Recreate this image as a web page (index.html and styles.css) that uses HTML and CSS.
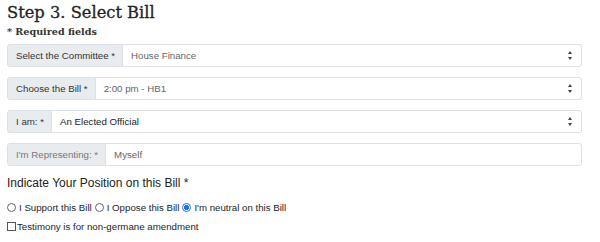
FILE: index.html
```html
<!DOCTYPE html>
<html lang="en">
<head>
<meta charset="UTF-8">
<title>Step 3. Select Bill</title>
<link rel="stylesheet" href="styles.css">
</head>
<body>

<div class="container">
    <h2>Step 3. Select Bill</h2>
    <p class="required">* Required fields</p>

    <div class="input-group">
        <span class="addon">Select the Committee *</span>
        <div class="control select">House Finance<span class="caret"></span></div>
    </div>
    <div class="input-group">
        <span class="addon">Choose the Bill *</span>
        <div class="control select">2:00 pm - HB1<span class="caret"></span></div>
    </div>
    <div class="input-group">
        <span class="addon">I am: *</span>
        <div class="control select dark">An Elected Official<span class="caret"></span></div>
    </div>
    <div class="input-group">
        <span class="addon muted">I'm Representing: *</span>
        <div class="control">Myself</div>
    </div>

    <h4>Indicate Your Position on this Bill *</h4>
    <div class="radios">
        <label><span class="radio"></span>I Support this Bill</label>
        <label><span class="radio"></span>I Oppose this Bill</label>
        <label><span class="radio checked"></span>I'm neutral on this Bill</label>
    </div>
    <label class="check"><span class="box"></span>Testimony is for non-germane amendment</label>
</div>

</body>
</html>
```

FILE: styles.css
```css
body {
    margin: 0;
    padding: 0;
    background-color: #fff;
    color: #212529;
    font-family: "Liberation Sans", Arial, sans-serif;
}
.container {
    padding: 0 18px 0 7px;
}
h2 {
    margin: 0;
    padding-top: 3px;
    height: 23px;
    font-family: "DejaVu Serif", serif;
    font-weight: normal;
    font-size: 16.3px;
    color: #222;
    -webkit-text-stroke: 0.3px #222;
}
.required {
    margin: 0 0 7px;
    height: 11px;
    line-height: 11px;
    font-family: "DejaVu Serif", serif;
    font-weight: bold;
    font-size: 9.6px;
    color: #333;
}
.input-group {
    display: flex;
    height: 23px;
    margin-bottom: 10px;
    font-size: 9.7px;
}
.addon {
    display: flex;
    align-items: center;
    padding: 0 7px 0 8px;
    background-color: #e9ecef;
    border: 1px solid #dde1e5;
    border-radius: 3px 0 0 3px;
    color: #333;
    white-space: nowrap;
}
.addon.muted {
    color: #777;
}
.control {
    flex: 1;
    display: flex;
    align-items: center;
    padding: 0 8px;
    border: 1px solid #dde1e5;
    border-left: none;
    border-radius: 0 3px 3px 0;
    color: #666;
}
.control.dark {
    color: #222;
}
.caret {
    margin-left: auto;
    width: 5px;
    height: 9px;
    position: relative;
}
.caret::before,
.caret::after {
    content: '';
    position: absolute;
    left: 0;
    border-left: 2.5px solid transparent;
    border-right: 2.5px solid transparent;
}
.caret::before {
    top: 0;
    border-bottom: 3.5px solid #444;
}
.caret::after {
    bottom: 0;
    border-top: 3.5px solid #444;
}
h4 {
    margin: 2px 0 12px;
    font-weight: normal;
    font-size: 12px;
    color: #222;
}
.radios {
    display: flex;
    gap: 3px;
    font-size: 9.7px;
    margin-bottom: 8px;
}
.radios label {
    display: flex;
    align-items: center;
}
.radio {
    width: 7px;
    height: 7px;
    border: 1px solid #666;
    border-radius: 50%;
    margin-right: 3px;
}
.radio.checked {
    border-color: #1a73e8;
    background: radial-gradient(circle, #1a73e8 0 2.3px, #fff 2.8px);
}
.check {
    display: flex;
    align-items: center;
    font-size: 9.7px;
}
.box {
    width: 7px;
    height: 7px;
    border: 1px solid #555;
    margin-right: 1px;
}
```
